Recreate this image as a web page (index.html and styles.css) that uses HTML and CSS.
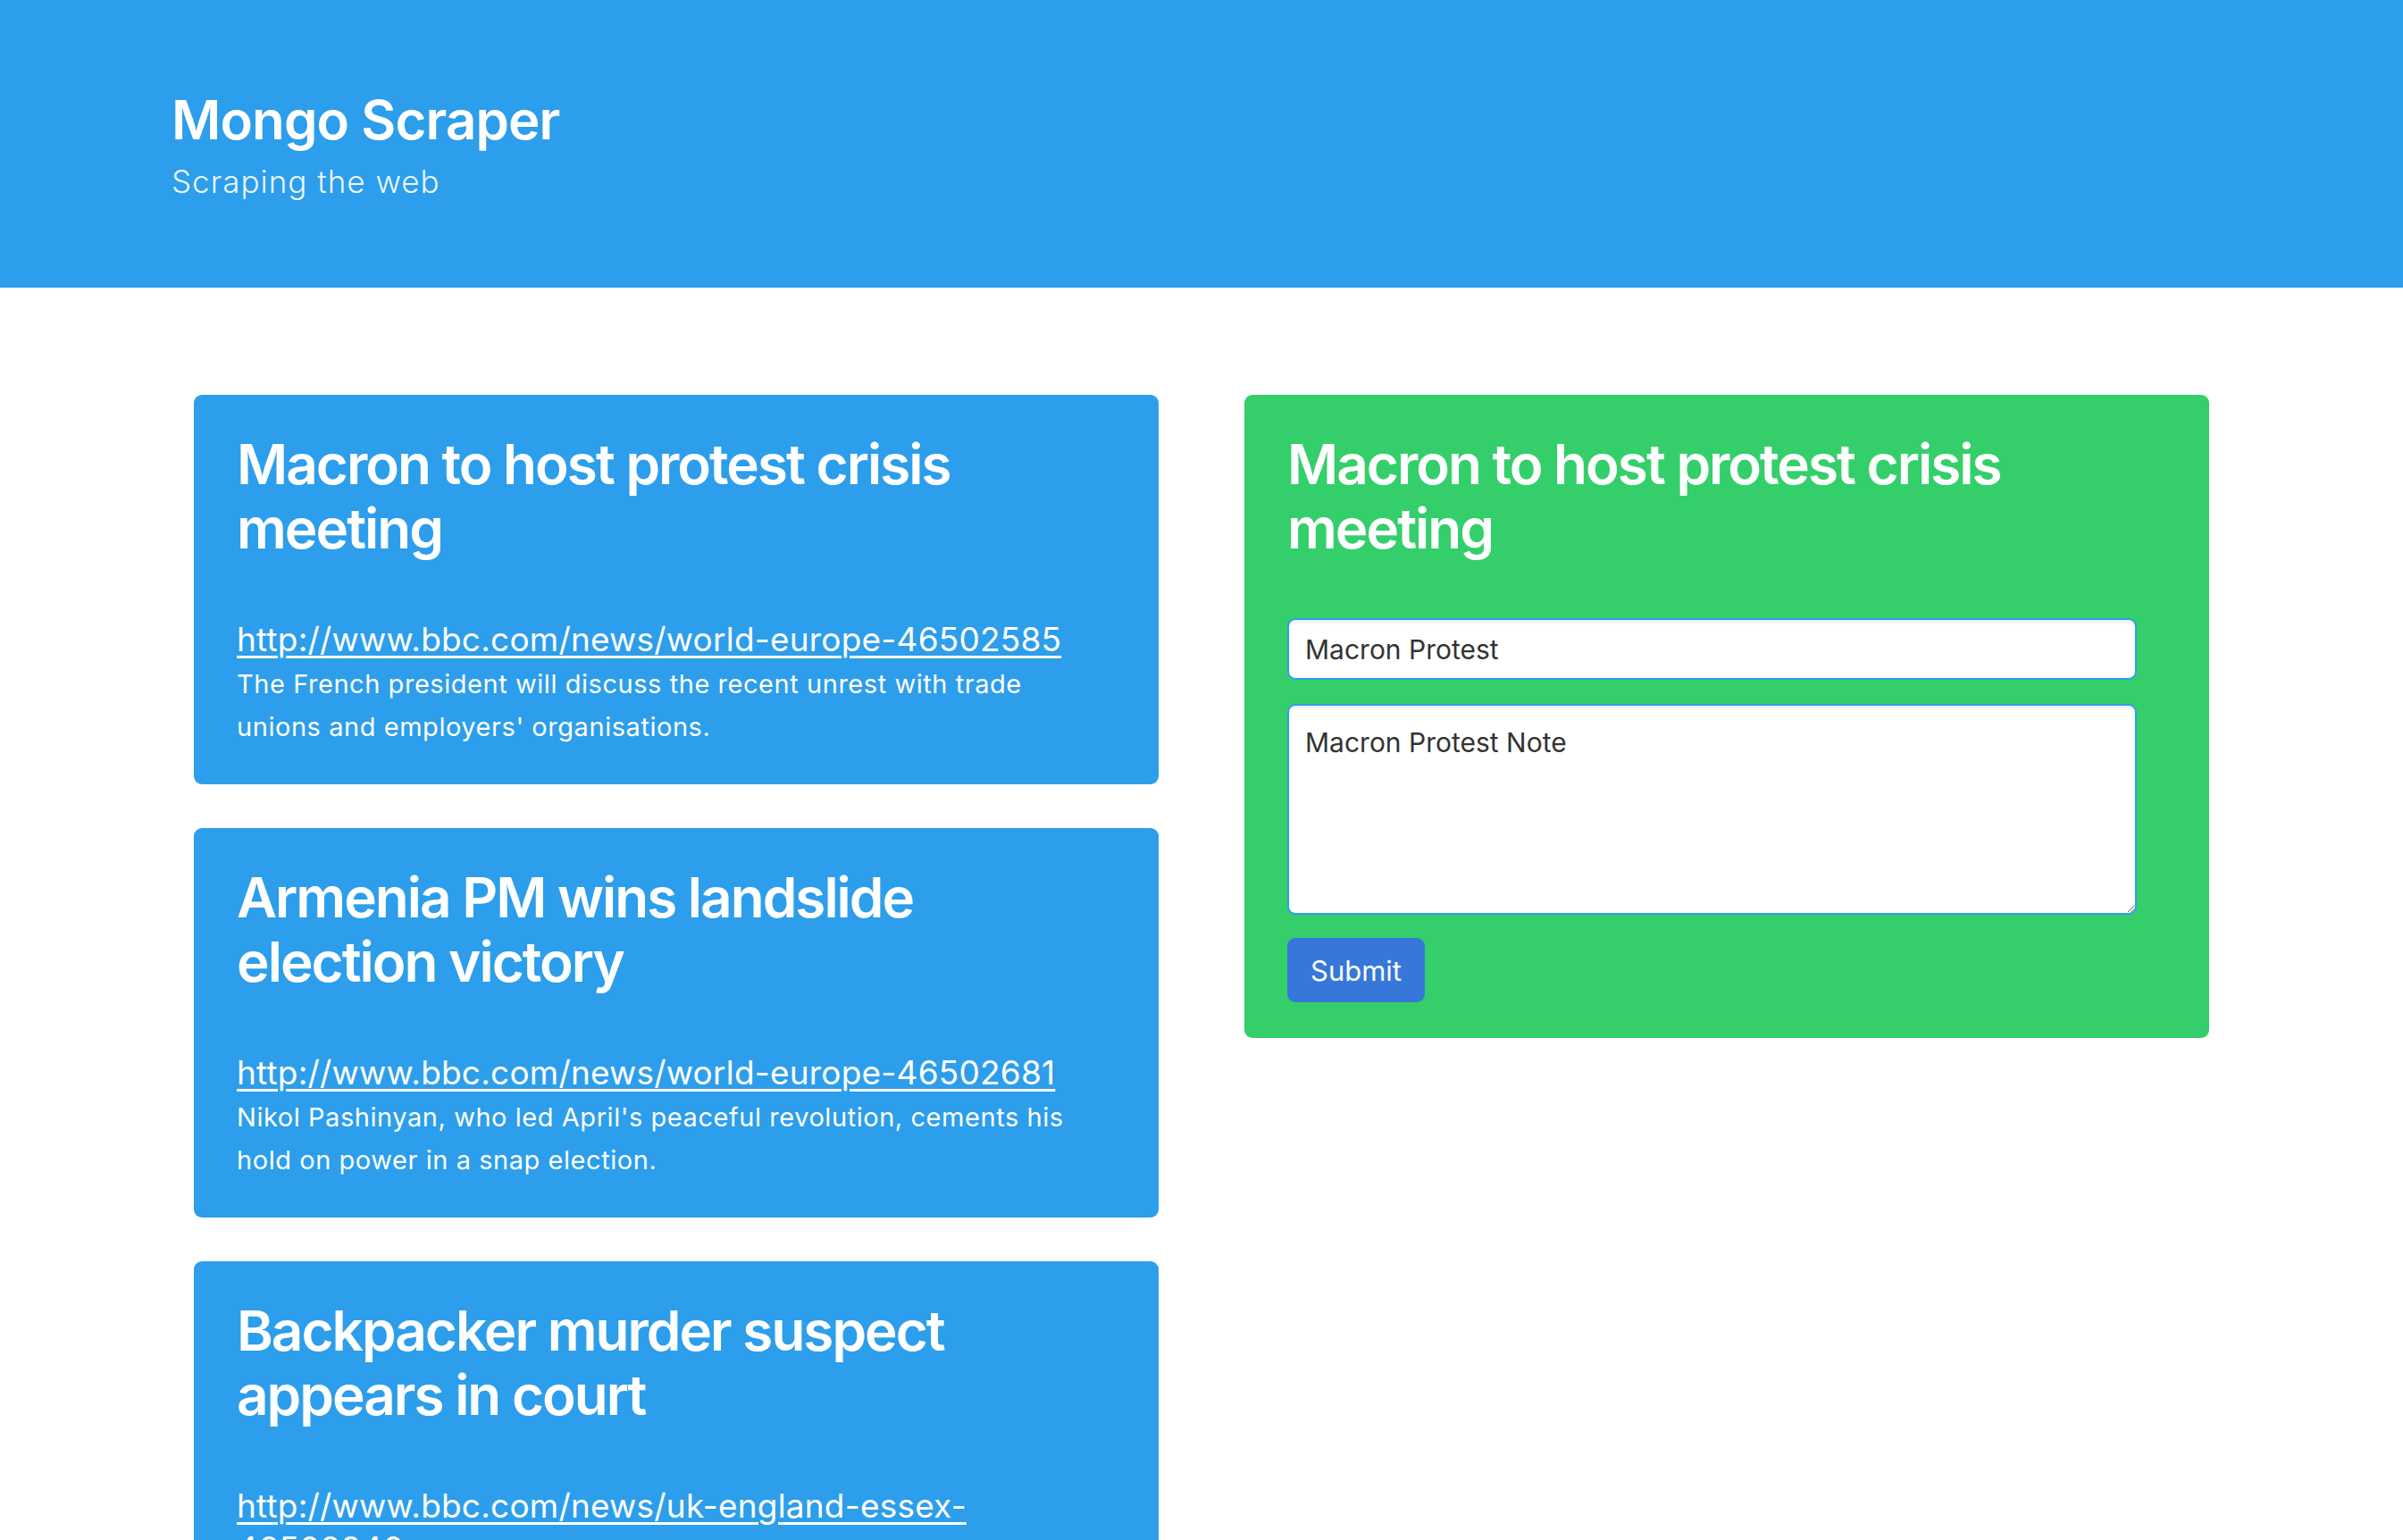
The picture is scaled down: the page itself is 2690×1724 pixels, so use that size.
FILE: index.html
```html
<!DOCTYPE html>
<html lang="en">
<head>
<meta charset="utf-8">
<title>Mongo Scraper</title>
<link rel="stylesheet" href="styles.css">
</head>
<body>
<header class="jumbotron">
  <h1 class="brand">Mongo Scraper</h1>
  <p class="tagline">Scraping the web</p>
</header>
<main class="layout">
  <section class="articles">
    <article class="article-card">
      <h2 class="card-title">Macron to host protest crisis meeting</h2>
      <a class="card-link" href="#">http://www.bbc.com/news/world-europe-46502585</a>
      <p class="card-text">The French president will discuss the recent unrest with trade unions and employers' organisations.</p>
    </article>
    <article class="article-card">
      <h2 class="card-title">Armenia PM wins landslide election victory</h2>
      <a class="card-link" href="#">http://www.bbc.com/news/world-europe-46502681</a>
      <p class="card-text">Nikol Pashinyan, who led April's peaceful revolution, cements his hold on power in a snap election.</p>
    </article>
    <article class="article-card">
      <h2 class="card-title">Backpacker murder suspect appears in court</h2>
      <a class="card-link" href="#">http://www.bbc.com/news/uk-england-essex-46502840</a>
      <p class="card-text">A man has appeared in court charged with the murder of a backpacker.</p>
    </article>
  </section>
  <aside class="note-panel">
    <h2 class="card-title">Macron to host protest crisis meeting</h2>
    <form class="note-form">
      <input class="field" type="text" value="Macron Protest">
      <textarea class="field field-area">Macron Protest Note</textarea>
      <button class="btn-submit" type="button">Submit</button>
    </form>
  </aside>
</main>
</body>
</html>
```
FILE: styles.css
```css
html, body {
  margin: 0;
  padding: 0;
  background: #ffffff;
  font-family: "Inter", "Liberation Sans", sans-serif;
}

.jumbotron {
  background: #2c9eeb;
  color: #ffffff;
  height: 322px;
  box-sizing: border-box;
  padding: 98px 192px 0;
}

.brand {
  margin: 0;
  font-size: 60px;
  line-height: 72px;
  font-weight: 600;
  letter-spacing: -0.9px;
}

.tagline {
  margin: 8px 0 0;
  font-size: 35px;
  line-height: 50px;
  font-weight: 300;
  letter-spacing: 1px;
  color: rgba(255, 255, 255, 0.92);
}

.layout {
  display: grid;
  grid-template-columns: 1080px 1080px;
  column-gap: 96px;
  justify-content: center;
  align-items: start;
  padding-top: 120px;
}

.articles {
  display: flex;
  flex-direction: column;
  gap: 49px;
}

.article-card,
.note-panel {
  background: #2c9eeb;
  color: #ffffff;
  border-radius: 9px;
  padding: 42px 48px 40px;
}

.note-panel {
  background: #34cf6a;
}

.card-title {
  margin: 0 0 64px;
  font-size: 62px;
  line-height: 72px;
  font-weight: 600;
  letter-spacing: -2px;
}

.card-link {
  display: block;
  color: #ffffff;
  text-decoration: underline;
  text-decoration-thickness: 3px;
  text-underline-offset: 5px;
  font-size: 37px;
  line-height: 48px;
  letter-spacing: 0.2px;
}

.card-text {
  margin: 2px 0 0;
  padding-right: 14px;
  font-size: 29px;
  line-height: 48px;
  font-weight: 400;
  letter-spacing: 0.55px;
}

.note-form {
  display: flex;
  flex-direction: column;
  align-items: flex-start;
  padding-right: 33px;
}

.field {
  box-sizing: border-box;
  width: 100%;
  height: 69px;
  margin: 0;
  padding: 0 18px;
  border: 2px solid #2c9eeb;
  border-radius: 9px;
  background: #ffffff;
  box-shadow: inset 0 3px 3px rgba(0, 0, 0, 0.07);
  font-family: "Inter", "Liberation Sans", sans-serif;
  font-size: 30px;
  color: #333333;
  outline: none;
}

.field-area {
  height: 236px;
  margin-top: 27px;
  padding: 19px 18px;
  line-height: 45px;
  resize: vertical;
}

.btn-submit {
  margin-top: 26px;
  height: 72px;
  padding: 0 26px;
  border: none;
  border-radius: 9px;
  background: #3777da;
  color: #ffffff;
  font-family: "Inter", "Liberation Sans", sans-serif;
  font-size: 31px;
  font-weight: 400;
  cursor: pointer;
}
```
